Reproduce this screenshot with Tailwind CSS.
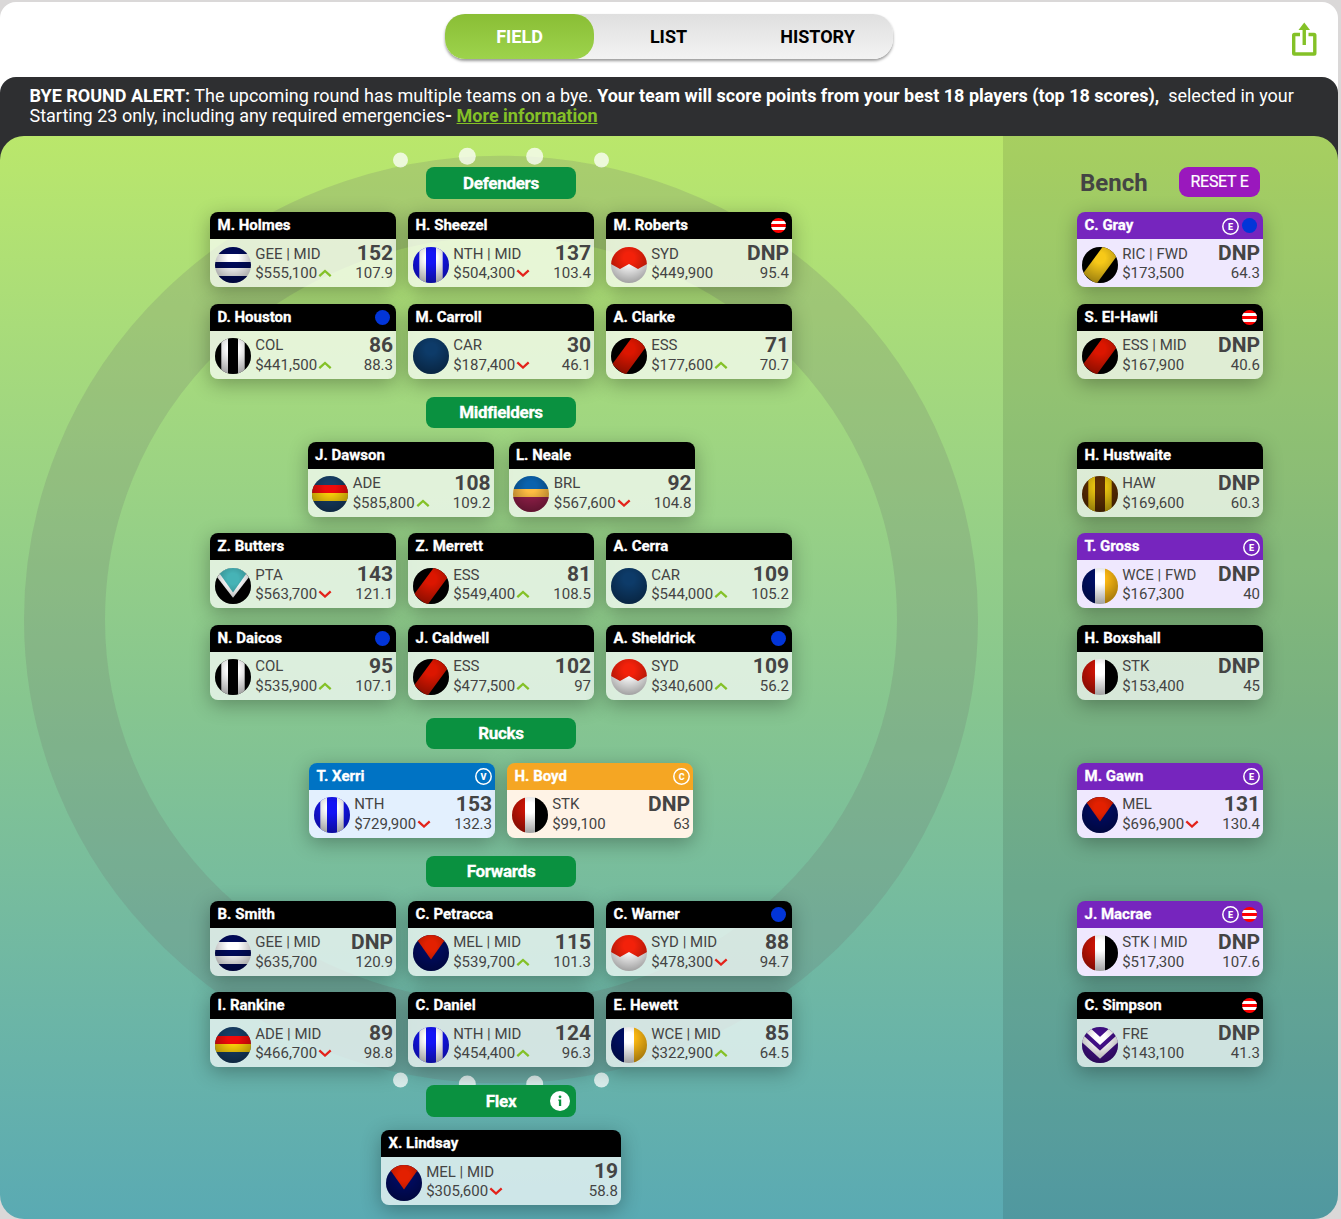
<!DOCTYPE html>
<html lang="en">

<head>
  <meta charset="utf-8">
  <meta name="viewport" content="width=device-width, initial-scale=1">
  <title>My Team - Field</title>
  <script src="https://cdn.jsdelivr.net/npm/@tailwindcss/browser@4"></script>
</head>

<body class="h-[1219px] overflow-hidden bg-[#dad8d8] pt-0.5 font-[Roboto,sans-serif] text-[#444]">

  <div class="h-[1217px] w-[1338px] rounded-t-2xl bg-white">

    <!-- view tabs -->
    <header class="flex h-[75px] items-start justify-between pt-3">
      <div class="w-[445px]"></div>
      <nav class="flex h-[45px] w-[448px] rounded-[20px] bg-linear-to-b from-[#dfdfdf] to-[#f3f3f3] text-center text-lg/[46px] font-bold text-black shadow-[0_2px_3px_rgba(0,0,0,0.4)]">
        <a class="w-[149px] rounded-[20px] bg-linear-to-b from-[#8abe35] to-[#9dd34c] text-white">FIELD</a>
        <a class="w-[149px]">LIST</a>
        <a class="w-[149px]">HISTORY</a>
      </nav>
      <div class="flex w-[445px] justify-end pt-[7px] pr-5">
        <svg class="h-[36px] w-[28px]" viewBox="0 0 28 36" fill="none" stroke="#84c127" stroke-width="3.400" stroke-linejoin="round">
          <path d="M10 13.500H4.500Q3.700 13.500 3.700 14.300V32.200Q3.700 33 4.500 33H24Q24.800 33 24.800 32.200V14.300Q24.800 13.500 24 13.500H18.500" />
          <path d="M14.250 24V6" />
          <path d="M14.250 1.500L20 9H8.500Z" fill="#84c127" stroke="none" />
        </svg>
      </div>
    </header>

    <div class="h-[1142px] rounded-t-2xl bg-[#2e2f31]">
      <p class="h-[59px] pt-[9px] pr-8 pl-[29.5px] text-lg/5 text-white">
        <b class="font-bold">BYE ROUND ALERT:</b> The upcoming round has multiple teams on a bye. <b class="font-bold">Your team will score points from your best 18 players (top 18 scores),</b>&nbsp; selected in your<br>Starting 23 only, including any required emergencies<b class="font-bold">- <a class="text-[#84c127] underline">More information</a></b>
      </p>

      <div class="bg-[#dad8d8] bg-linear-to-b from-[#2e2f31] from-50% to-[#dad8d8] to-50%">
        <main class="relative flex h-[1083px] overflow-hidden rounded-[24px] bg-linear-to-b from-[#bae76b] via-[#87c68f] via-[52%] to-[#5aaab3]">

          <!-- boundary ring and goal posts behind the cards -->
          <svg class="absolute top-0 left-0" width="1003" height="1083" viewBox="0 136 1003 1083">
            <ellipse cx="501" cy="619.500" rx="436.500" ry="423.300" fill="none" stroke="#6f6f6f" stroke-opacity=".2" stroke-width="81" />
            <g fill="#fff" fill-opacity=".75">
              <circle cx="400.500" cy="160" r="7.500" />
              <circle cx="467.300" cy="156.300" r="8.500" />
              <circle cx="534.700" cy="156.300" r="8.500" />
              <circle cx="601.500" cy="160" r="7.500" />
              <circle cx="400.500" cy="1080" r="7.500" />
              <circle cx="467.300" cy="1084" r="8.500" />
              <circle cx="534.700" cy="1084" r="8.500" />
              <circle cx="601.500" cy="1080" r="7.500" />
            </g>
          </svg>

          <section id="field" class="relative flex w-[1002px] flex-col items-center pt-[31px]"></section>
          <div class="w-px"></div>

          <aside class="relative flex-1 bg-black/10 pt-[31px] pl-[74px]">
            <div class="flex h-[45px] w-[183px] items-start justify-between pl-[3px]">
              <h2 class="text-2xl/8 font-bold">Bench</h2>
              <button class="h-[30px] w-[81px] rounded-[9px] bg-[#9a18bd] text-base/[30px] tracking-[-0.3px] text-white [-webkit-text-stroke:0.2px]">RESET E</button>
            </div>
            <div id="bench"></div>
          </aside>
        </main>
      </div>
    </div>
  </div>

  <!-- shared shading for the club balls -->
  <svg class="absolute" width="0" height="0">
    <defs>
      <radialGradient id="shade" cx=".5" cy=".3" r=".75">
        <stop offset=".2" stop-color="#000" stop-opacity="0" />
        <stop offset="1" stop-color="#000" stop-opacity=".4" />
      </radialGradient>
      <clipPath id="ball"><circle cx="18" cy="18" r="18" /></clipPath>
    </defs>
  </svg>

  <script>
    const stripes = (a, b) => `<path fill="${a}" d="M0 0h36v36H0z"/><path fill="${b}" d="M6.300 0H13v36H6.300zM23 0h6.700v36H23z"/>`;
    const thirds = (a, b, c) => `<path fill="${a}" d="M0 0h13v36H0z"/><path fill="${b}" d="M13 0h10v36H13z"/><path fill="${c}" d="M23 0h13v36H23z"/>`;
    const sash = (c) => `<path d="M0 0h36v36H0z"/><path fill="${c}" d="M22 -2L36 7.500L14 37.500L1 26.500Z"/>`;

    const clubs = {
      GEE: '<path fill="#fff" d="M0 0h36v36H0z"/><path fill="#000a5a" d="M0 0h36v7H0zM0 15h36v6H0zM0 29h36v7H0z"/>',
      NTH: stripes('#1414f5', '#fff'),
      COL: stripes('#000', '#fff'),
      HAW: stripes('#5e2f02', '#e8c30f'),
      SYD: '<path fill="#fff" d="M0 0h36v36H0z"/><path fill="#f3210a" d="M0 0h36v17L27 22L18 17L9 22L0 17z"/>',
      CAR: '<path fill="#0d3b69" d="M0 0h36v36H0z"/>',
      ESS: sash('#dc1600'),
      RIC: sash('#f7c918'),
      ADE: '<path fill="#173f66" d="M0 0h36v36H0z"/><path fill="#ee0a0a" d="M0 9h36v8H0z"/><path fill="#fdd20a" d="M0 17h36v8H0z"/>',
      BRL: '<path fill="#0a62ad" d="M0 0h36v13H0z"/><path fill="#ffbd42" d="M0 13h36v8H0z"/><path fill="#96204b" d="M0 21h36v15H0z"/>',
      WCE: thirds('#000f66', '#fff', '#fdb913'),
      STK: thirds('#cc1406', '#fff', '#000'),
      MEL: '<path fill="#000b63" d="M0 0h36v36H0z"/><path fill="#e32000" d="M0 -1h36L18 24.500z"/>',
      PTA: '<path d="M0 0h36v36H0z"/><path fill="#fff" d="M0 0h36v6.500L18 29.700L0 6.500z"/><path fill="#46b3b6" d="M0 -1h36L18 24.500z"/>',
      FRE: '<path fill="#43108a" d="M0 0h36v36H0z"/><path fill="none" stroke="#fff" stroke-width="6" d="M0 -2.500L18 14L36 -2.500M0 11.300L18 27.800L36 11.300"/>',
    };

    // card colours by role: E = emergency, V = vice captain, C = captain
    const heads = { '': 'bg-black', E: 'bg-[#7625be]', V: 'bg-[#0073c4]', C: 'bg-[#f5a623]' };
    const bodies = { '': 'bg-white/70', E: 'bg-[#efe8fe]', V: 'bg-[#e3f0fe]', C: 'bg-[#fff3e6]' };

    const statusIcons = {
      '': '',
      dot: '<svg class="mr-[3px] size-[15px]" viewBox="0 0 15 15"><circle cx="7.500" cy="7.500" r="7.500" fill="#0235d8"/></svg>',
      out: '<svg class="mr-[3px] size-[15px]" viewBox="0 0 15 15"><clipPath id="o"><circle cx="7.500" cy="7.500" r="7.500"/></clipPath><g clip-path="url(#o)"><path fill="#f00" d="M0 0h15v15H0z"/><path fill="#fff" d="M0 3h15v3H0zM0 9h15v3H0z"/></g></svg>',
    };

    const arrows = {
      '': '',
      up: '<svg class="ml-[1px] h-2 w-[14px]" viewBox="0 0 14 8" fill="none" stroke="#84c127" stroke-width="2.300"><path d="M1.300 7.200L7 2L12.700 7.200"/></svg>',
      down: '<svg class="ml-[1px] h-2 w-[14px]" viewBox="0 0 14 8" fill="none" stroke="#e3231b" stroke-width="2.300"><path d="M1.300 1.300L7 6.500L12.700 1.300"/></svg>',
    };

    // [name, club, second position, price, arrow, score, average, status, role]
    function card(p, low, wide) {
      const [name, club, pos, price, arrow, score, avg, status = '', role = ''] = p;
      return `
        <article class="${wide ? 'w-[240px]' : 'w-[186px]'} h-[75px] overflow-hidden rounded-[8px] shadow-[0_5px_20px_rgba(0,0,0,0.3)]">
          <div class="${heads[role]} flex h-[27px] items-center gap-[3px] pr-[3px] pl-[7.500px] text-[15px] font-bold text-white">
            <span class="grow pb-0.5 leading-6 [-webkit-text-stroke:0.3px]">${name}</span>
            ${role ? `<svg class="${low ? 'mt-px' : ''} size-[17px]" viewBox="0 0 17 17"><circle cx="8.500" cy="8.500" r="7.700" fill="none" stroke="#fff" stroke-width="1.500"/><text x="8.600" y="11.700" fill="#fff" text-anchor="middle" class="text-[9px] font-black">${role}</text></svg>` : ''}
            ${statusIcons[status]}
          </div>
          <div class="${bodies[role]} flex h-[48px] pr-[3px] pl-[4.900px]">
            <svg class="${low ? 'mt-2' : 'mt-[7px]'} size-9" viewBox="0 0 36 36"><g clip-path="url(#ball)">${clubs[club]}<path fill="url(#shade)" d="M0 0h36v36H0z"/></g></svg>
            <div class="ml-[4.300px] grow text-[15px]">
              <div class="${low ? 'mt-1.5 h-[18px]' : 'mt-[5px] h-[19px]'} leading-[19px]">${club}${pos ? ' | ' + pos : ''}</div>
              <div class="flex items-center leading-5">${price}${arrows[arrow]}</div>
            </div>
            <div class="text-right">
              <div class="mt-[2px] h-[22px] text-[21px]/[24px] font-bold">${score}</div>
              <div class="text-[15px]/5">${avg}</div>
            </div>
          </div>
        </article>`;
    }

    const field = [
      { title: 'Defenders', css: 'h-8 leading-8' },
      { css: 'mt-[13px] gap-3', low: true, players: [
        ['M. Holmes', 'GEE', 'MID', '$555,100', 'up', '152', '107.9'],
        ['H. Sheezel', 'NTH', 'MID', '$504,300', 'down', '137', '103.4'],
        ['M. Roberts', 'SYD', '', '$449,900', '', 'DNP', '95.4', 'out'],
      ] },
      { css: 'mt-[17px] gap-3', players: [
        ['D. Houston', 'COL', '', '$441,500', 'up', '86', '88.3', 'dot'],
        ['M. Carroll', 'CAR', '', '$187,400', 'down', '30', '46.1'],
        ['A. Clarke', 'ESS', '', '$177,600', 'up', '71', '70.7'],
      ] },
      { title: 'Midfielders', css: 'mt-[18px] h-[31px] leading-[30px]' },
      { css: 'mt-3.5 gap-[15px]', players: [
        ['J. Dawson', 'ADE', '', '$585,800', 'up', '108', '109.2'],
        ['L. Neale', 'BRL', '', '$567,600', 'down', '92', '104.8'],
      ] },
      { css: 'mt-4 gap-3', low: true, players: [
        ['Z. Butters', 'PTA', '', '$563,700', 'down', '143', '121.1'],
        ['Z. Merrett', 'ESS', '', '$549,400', 'up', '81', '108.5'],
        ['A. Cerra', 'CAR', '', '$544,000', 'up', '109', '105.2'],
      ] },
      { css: 'mt-[17px] gap-3', players: [
        ['N. Daicos', 'COL', '', '$535,900', 'up', '95', '107.1', 'dot'],
        ['J. Caldwell', 'ESS', '', '$477,500', 'up', '102', '97'],
        ['A. Sheldrick', 'SYD', '', '$340,600', 'up', '109', '56.2', 'dot'],
      ] },
      { title: 'Rucks', css: 'mt-[18px] h-[31px] leading-[30px]' },
      { css: 'mt-3.5 gap-3', players: [
        ['T. Xerri', 'NTH', '', '$729,900', 'down', '153', '132.3', '', 'V'],
        ['H. Boyd', 'STK', '', '$99,100', '', 'DNP', '63', '', 'C'],
      ] },
      { title: 'Forwards', css: 'mt-[18px] h-[31px] leading-[30px]' },
      { css: 'mt-3.5 gap-3', players: [
        ['B. Smith', 'GEE', 'MID', '$635,700', '', 'DNP', '120.9'],
        ['C. Petracca', 'MEL', 'MID', '$539,700', 'up', '115', '101.3'],
        ['C. Warner', 'SYD', 'MID', '$478,300', 'down', '88', '94.7', 'dot'],
      ] },
      { css: 'mt-4 gap-3', low: true, players: [
        ['I. Rankine', 'ADE', 'MID', '$466,700', 'down', '89', '98.8'],
        ['C. Daniel', 'NTH', 'MID', '$454,400', 'up', '124', '96.3'],
        ['E. Hewett', 'WCE', 'MID', '$322,900', 'up', '85', '64.5'],
      ] },
      { title: 'Flex', css: 'mt-[18px] h-8 leading-8', info: true },
      { css: 'mt-[13px]', low: true, wide: true, players: [
        ['X. Lindsay', 'MEL', 'MID', '$305,600', 'down', '19', '58.8'],
      ] },
    ];

    const bench = [
      { css: '', low: true, player: ['C. Gray', 'RIC', 'FWD', '$173,500', '', 'DNP', '64.3', 'dot', 'E'] },
      { css: 'mt-[17px]', player: ['S. El-Hawli', 'ESS', 'MID', '$167,900', '', 'DNP', '40.6', 'out'] },
      { css: 'mt-[63px]', player: ['H. Hustwaite', 'HAW', '', '$169,600', '', 'DNP', '60.3'] },
      { css: 'mt-4', low: true, player: ['T. Gross', 'WCE', 'FWD', '$167,300', '', 'DNP', '40', '', 'E'] },
      { css: 'mt-[17px]', player: ['H. Boxshall', 'STK', '', '$153,400', '', 'DNP', '45'] },
      { css: 'mt-[63px]', player: ['M. Gawn', 'MEL', '', '$696,900', 'down', '131', '130.4', '', 'E'] },
      { css: 'mt-[63px]', player: ['J. Macrae', 'STK', 'MID', '$517,300', '', 'DNP', '107.6', 'out', 'E'] },
      { css: 'mt-4', low: true, player: ['C. Simpson', 'FRE', '', '$143,100', '', 'DNP', '41.3', 'out'] },
    ];

    const infoIcon = '<svg class="absolute top-1.5 right-1.5 size-5" viewBox="0 0 20 20"><circle cx="10" cy="10" r="10" fill="#fff"/><circle cx="10" cy="5.800" r="1.400" fill="#0a9140"/><path fill="#0a9140" d="M8.300 8.500h2.900v6.500H8.900V9.700h-.6z"/></svg>';

    document.getElementById('field').innerHTML = field.map((r) => r.title
      ? `<h3 class="${r.css} relative w-[150px] rounded-[8px] bg-[#0a9140] text-center text-[17px] font-bold tracking-[-0.3px] text-white [-webkit-text-stroke:0.3px]">${r.title}${r.info ? infoIcon : ''}</h3>`
      : `<div class="${r.css} flex">${r.players.map((p) => card(p, r.low, r.wide)).join('')}</div>`
    ).join('');

    document.getElementById('bench').innerHTML = bench.map((r) => `<div class="${r.css}">${card(r.player, r.low)}</div>`).join('');
  </script>

</body>

</html>
